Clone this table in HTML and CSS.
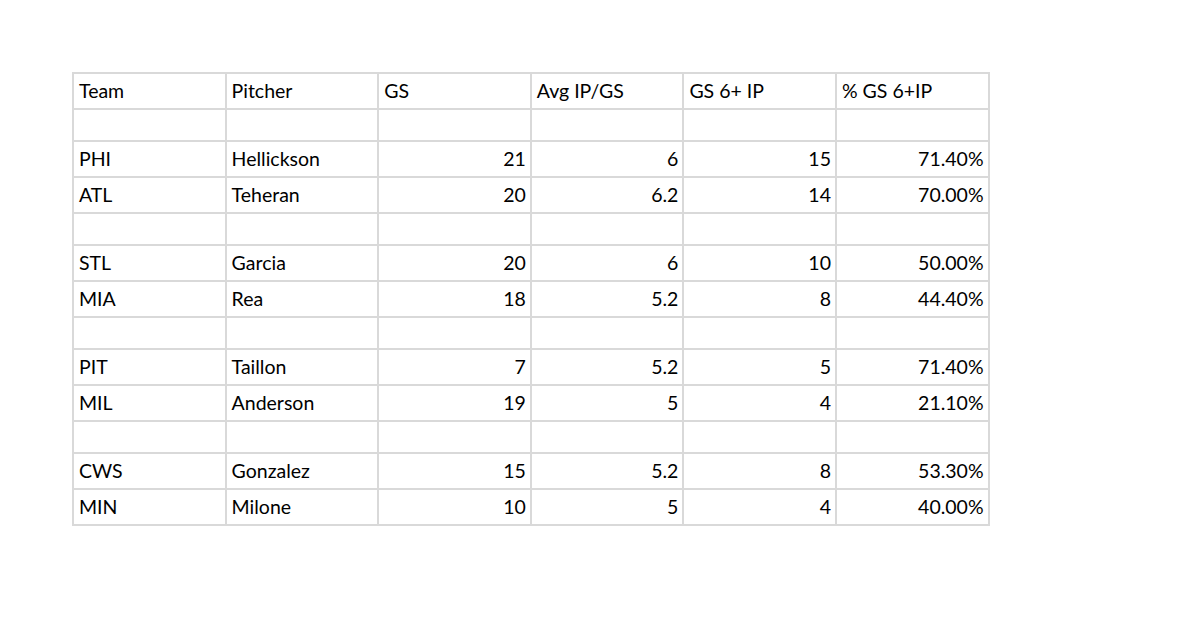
FILE: index.html
```html
<!DOCTYPE html>
<html>
<head>
<meta charset="utf-8">
<link rel="stylesheet" href="styles.css">
</head>
<body>
<table class="sheet">
  <colgroup>
    <col class="c"><col class="c"><col class="c"><col class="c"><col class="c"><col class="c">
  </colgroup>
  <tr class="head"><td>Team</td><td>Pitcher</td><td>GS</td><td>Avg IP/GS</td><td>GS 6+ IP</td><td>% GS 6+IP</td></tr>
  <tr class="gap"><td></td><td></td><td></td><td></td><td></td><td></td></tr>
  <tr class="row"><td>PHI</td><td>Hellickson</td><td class="n">21</td><td class="n">6</td><td class="n">15</td><td class="n">71.40%</td></tr>
  <tr class="row"><td>ATL</td><td>Teheran</td><td class="n">20</td><td class="n">6.2</td><td class="n">14</td><td class="n">70.00%</td></tr>
  <tr class="gap"><td></td><td></td><td></td><td></td><td></td><td></td></tr>
  <tr class="row"><td>STL</td><td>Garcia</td><td class="n">20</td><td class="n">6</td><td class="n">10</td><td class="n">50.00%</td></tr>
  <tr class="row"><td>MIA</td><td>Rea</td><td class="n">18</td><td class="n">5.2</td><td class="n">8</td><td class="n">44.40%</td></tr>
  <tr class="gap"><td></td><td></td><td></td><td></td><td></td><td></td></tr>
  <tr class="row"><td>PIT</td><td>Taillon</td><td class="n">7</td><td class="n">5.2</td><td class="n">5</td><td class="n">71.40%</td></tr>
  <tr class="row"><td>MIL</td><td>Anderson</td><td class="n">19</td><td class="n">5</td><td class="n">4</td><td class="n">21.10%</td></tr>
  <tr class="gap"><td></td><td></td><td></td><td></td><td></td><td></td></tr>
  <tr class="row"><td>CWS</td><td>Gonzalez</td><td class="n">15</td><td class="n">5.2</td><td class="n">8</td><td class="n">53.30%</td></tr>
  <tr class="row"><td>MIN</td><td>Milone</td><td class="n">10</td><td class="n">5</td><td class="n">4</td><td class="n">40.00%</td></tr>
</table>
</body>
</html>
```
FILE: styles.css
```css
html, body {
  margin: 0;
  padding: 0;
  background: #ffffff;
}
body {
  padding: 72px 0 0 72px;
  font-family: "Lato", "Carlito", "Liberation Sans", sans-serif;
  font-size: 19.5px;
  color: #000000;
}
.sheet {
  border-collapse: collapse;
  table-layout: fixed;
  width: 916px;
}
.sheet .c {
  width: 152.6px;
}
.sheet td {
  border: 2px solid #d9d9d9;
  padding: 0 4px 5px 5px;
  vertical-align: bottom;
  line-height: 24px;
  white-space: nowrap;
  overflow: hidden;
}
.sheet td.n {
  text-align: right;
}
.head td {
  height: 36px;
  box-sizing: border-box;
}
.gap td {
  height: 32px;
  box-sizing: border-box;
}
.row td {
  height: 36px;
  box-sizing: border-box;
}
```
